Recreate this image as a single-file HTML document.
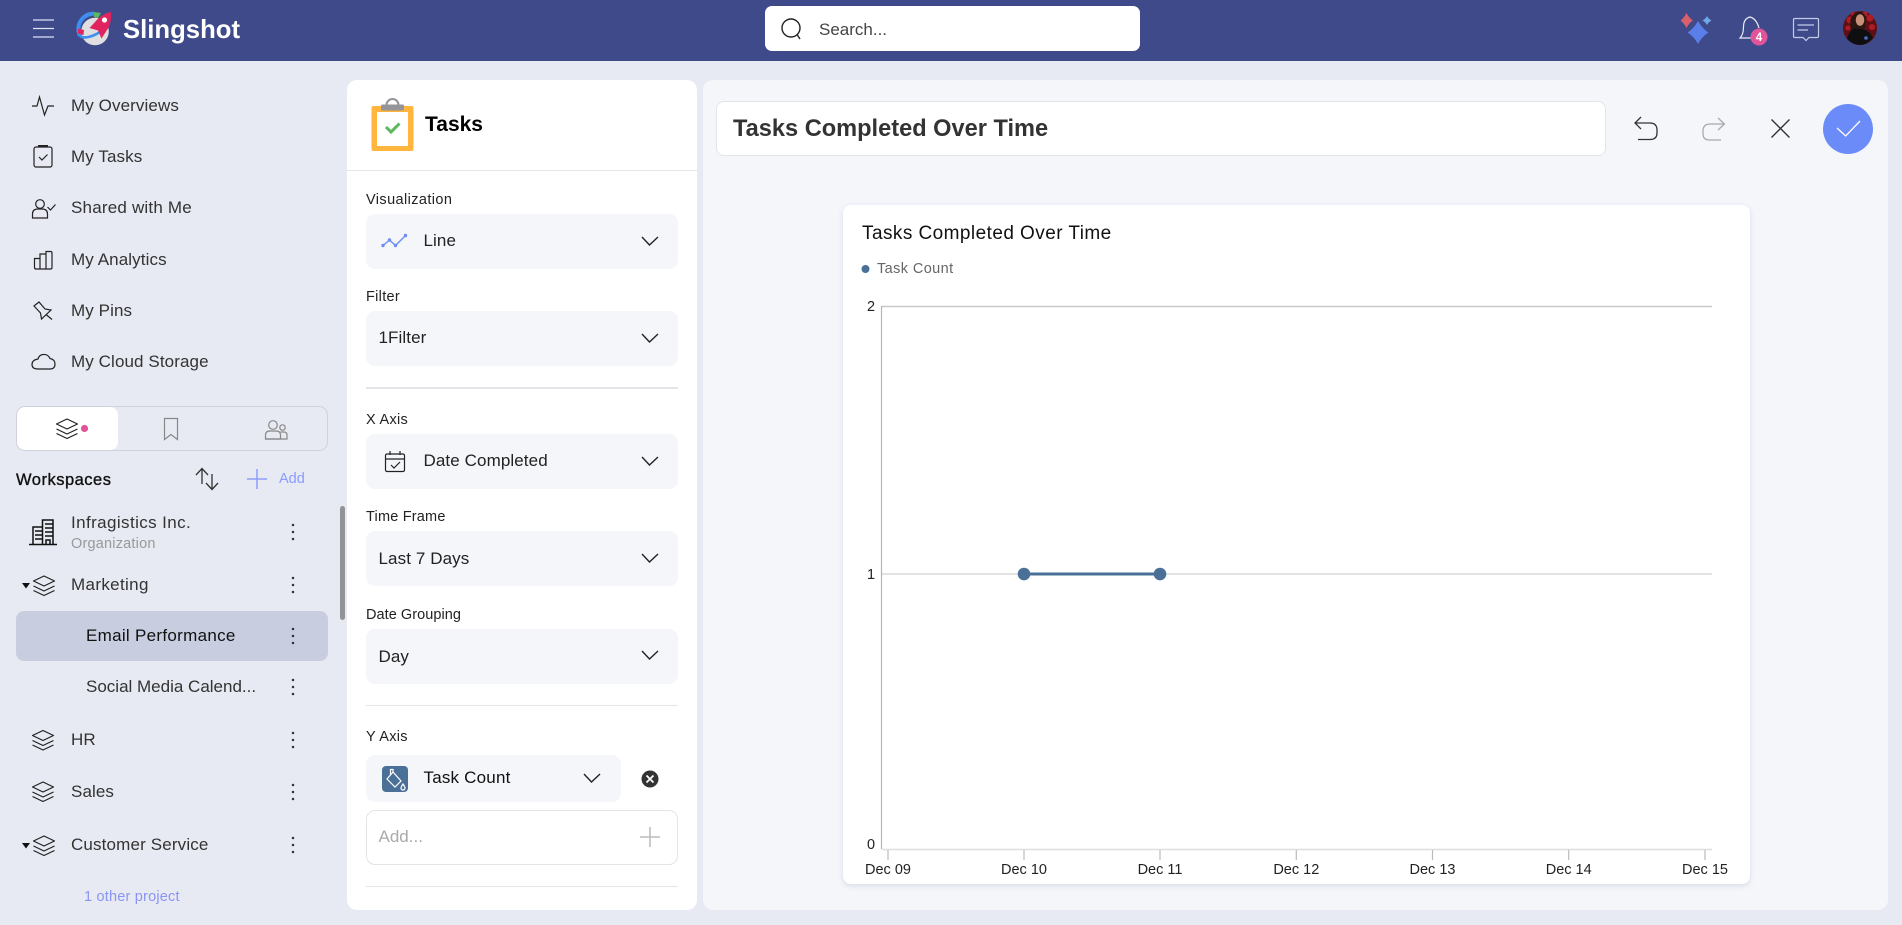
<!DOCTYPE html>
<html lang="en">
<head>
<meta charset="utf-8">
<title>Slingshot - Tasks Completed Over Time</title>
<style>
html,body{margin:0;padding:0;width:1902px;height:925px;overflow:hidden;background:#e7eaf2;font-family:"Liberation Sans",sans-serif;color:#333}
.b{position:absolute;box-sizing:border-box}
.t{position:absolute;white-space:nowrap;line-height:20px;height:20px}
.n{font-size:17px;letter-spacing:.1px;color:#333;left:71px}
.l{font-size:14.5px;letter-spacing:.3px;color:#222;left:366px}
.v{font-size:17px;letter-spacing:.1px;color:#222}
.s{left:366px;width:312px;height:55px;background:#f4f6fa;border-radius:9px}
.hr{left:366px;width:312px;height:1px;background:#e4e5e9}
svg.o{position:absolute;left:0;top:0;width:1902px;height:925px;pointer-events:none}
svg text{font-family:"Liberation Sans",sans-serif}
</style>
</head>
<body>
<div class="b" style="left:0;top:0;width:1902px;height:61px;background:#3f4a8a"></div>
<div class="t" style="left:123px;top:18px;font-size:25.7px;font-weight:bold;color:#fff;line-height:24px;height:24px">Slingshot</div>
<div class="b" style="left:765px;top:6px;width:375px;height:45px;background:#fff;border-radius:7px"></div>
<div class="t" style="left:819px;top:20px;font-size:17px;color:#444">Search...</div>

<div class="t n" style="top:96px">My Overviews</div>
<div class="t n" style="top:147px">My Tasks</div>
<div class="t n" style="top:198px;letter-spacing:.2px">Shared with Me</div>
<div class="t n" style="top:250px">My Analytics</div>
<div class="t n" style="top:301px">My Pins</div>
<div class="t n" style="top:352px">My Cloud Storage</div>

<div class="b" style="left:16px;top:406px;width:312px;height:45px;border:1px solid #cfd2dc;border-radius:9px"></div>
<div class="b" style="left:17px;top:407px;width:101px;height:43px;background:#fff;border-radius:8px"></div>
<div class="t" style="left:16px;top:470px;font-size:16.5px;color:#111;letter-spacing:.5px;-webkit-text-stroke:.35px #111">Workspaces</div>
<div class="t" style="left:279px;top:469px;font-size:14.5px;color:#8a9bff">Add</div>

<div class="t n" style="top:513px;letter-spacing:.4px">Infragistics Inc.</div>
<div class="t" style="left:71px;top:534px;font-size:14.5px;color:#999;letter-spacing:.2px">Organization</div>
<div class="t n" style="top:575px;letter-spacing:.35px">Marketing</div>
<div class="b" style="left:16px;top:611px;width:312px;height:50px;background:#c8cde0;border-radius:8px"></div>
<div class="t n" style="left:86px;top:626px;color:#111;letter-spacing:.3px">Email Performance</div>
<div class="t n" style="left:86px;top:677px;letter-spacing:0">Social Media Calend...</div>
<div class="t n" style="top:730px">HR</div>
<div class="t n" style="top:782px">Sales</div>
<div class="t n" style="top:835px;letter-spacing:.15px">Customer Service</div>
<div class="t" style="left:84px;top:887px;font-size:14.5px;color:#8a94f5;letter-spacing:.2px">1 other project</div>
<div class="b" style="left:340px;top:506px;width:5px;height:114px;background:#929396;border-radius:3px"></div>

<div class="b" style="left:347px;top:80px;width:350px;height:830px;background:#fff;border-radius:10px"></div>
<div class="b" style="left:347px;top:170px;width:350px;height:1px;background:#e5e5e8"></div>
<div class="t" style="left:425px;top:115px;font-size:21px;font-weight:bold;color:#000">Tasks</div>

<div class="t l" style="top:190px;letter-spacing:.4px">Visualization</div>
<div class="b s" style="top:214px"></div>
<div class="t v" style="left:423.5px;top:231px">Line</div>
<div class="t l" style="top:287px">Filter</div>
<div class="b s" style="top:311px"></div>
<div class="t v" style="left:378.5px;top:328px">1Filter</div>
<div class="b hr" style="top:387px;height:2px"></div>
<div class="t l" style="top:410px">X Axis</div>
<div class="b s" style="top:434px"></div>
<div class="t v" style="left:423.5px;top:451px">Date Completed</div>
<div class="t l" style="top:507px;letter-spacing:.2px">Time Frame</div>
<div class="b s" style="top:531px"></div>
<div class="t v" style="left:378.5px;top:549px">Last 7 Days</div>
<div class="t l" style="top:605px;letter-spacing:.05px">Date Grouping</div>
<div class="b s" style="top:629px"></div>
<div class="t v" style="left:378.5px;top:647px">Day</div>
<div class="b hr" style="top:705px"></div>
<div class="t l" style="top:727px">Y Axis</div>
<div class="b s" style="top:755px;width:255px;height:47px"></div>
<div class="t v" style="left:423.5px;top:768px;color:#111;letter-spacing:.2px">Task Count</div>
<div class="b" style="left:366px;top:810px;width:312px;height:55px;background:#fff;border:1px solid #e3e4e8;border-radius:9px"></div>
<div class="t" style="left:378.5px;top:827px;font-size:17px;color:#aaa">Add...</div>
<div class="b hr" style="top:886px"></div>

<div class="b" style="left:703px;top:80px;width:1185px;height:830px;background:#f4f6fa;border-radius:10px"></div>
<div class="b" style="left:716px;top:101px;width:890px;height:55px;background:#fff;border:1px solid #e3e4e8;border-radius:8px"></div>
<div class="t" style="left:733px;top:119px;font-size:23.6px;font-weight:bold;color:#333">Tasks Completed Over Time</div>

<div class="b" style="left:843px;top:205px;width:907px;height:679px;background:#fff;border-radius:8px;box-shadow:0 2px 6px rgba(60,70,110,.14)"></div>
<div class="t" style="left:862px;top:224px;font-size:19px;color:#111;letter-spacing:.44px">Tasks Completed Over Time</div>
<div class="t" style="left:877px;top:259px;font-size:14.5px;color:#666;letter-spacing:.4px">Task Count</div>

<svg class="o" viewBox="0 0 1902 925" xmlns="http://www.w3.org/2000/svg" fill="none">
  <defs>
    <path id="lay" d="M0 5.5L10.500 .5 21 5.500 10.500 10.500Z M0 10.500L10.500 15.500 21 10.500 M0 15L10.500 20 21 15" stroke="#222" stroke-width="1.200" stroke-linejoin="round"/>
    <g id="keb" fill="#333"><circle cx="0" cy="-7" r="1.250"/><circle cx="0" cy="0" r="1.250"/><circle cx="0" cy="7" r="1.250"/></g>
    <path id="chev" d="M-8 -4 L-.5 4 L8 -4" stroke="#222" stroke-width="1.400"/>
  </defs>

  <!-- header -->
  <g stroke="#dfe2f0" stroke-width="1.300"><path d="M33 20H54M33 28.500H54M33 37H54"/></g>
  <circle cx="95" cy="31.500" r="13.800" fill="#dfdfe2"/>
  <path d="M80 36C75 24 83 14 94 13.500" stroke="#3f8ef0" stroke-width="4"/>
  <path d="M94 12l7 1-3 5-4-1z" fill="#59b95d"/>
  <path d="M80 36C84 39 92 37 100 32" stroke="#3f8ef0" stroke-width="2.600"/>
  <path d="M78 28.500l6 1.500-.5 5-5.500-1.500z" fill="#e0245e"/>
  <path d="M111 12C111.500 20 110 26 107 30L101.500 38.500 98 30.500 89.500 28 95 22C99 17 104 13.500 111 12Z" fill="#e0245e"/>
  <circle cx="104.500" cy="20" r="2.600" fill="#fff"/>
  <circle cx="791" cy="28" r="9" stroke="#222" stroke-width="1.400"/><path d="M797 34.500L800 39" stroke="#222" stroke-width="1.400"/>
  <path d="M1698 21Q1702 28.500 1708.500 32.500Q1702 36.500 1698 44Q1694 36.500 1687.500 32.500Q1694 28.500 1698 21Z" fill="#5b7fe8"/>
  <path d="M1686.500 13Q1689 18 1693 20.500Q1689 23 1686.500 28Q1684 23 1680.500 20.500Q1684 18 1686.500 13Z" fill="#d9606a"/>
  <path d="M1707 16Q1708.500 19 1711.500 20.500Q1708.500 22 1707 25Q1705.500 22 1702.500 20.500Q1705.500 19 1707 16Z" fill="#6fa8e8"/>
  <path d="M1751 38H1740C1743 35 1743.500 31 1743.500 27C1743.500 21 1746 18 1750 17C1754 18 1757 21 1759 28" stroke="#e8eaf5" stroke-width="1.200"/>
  <circle cx="1759" cy="37" r="8.500" fill="#e0559a"/>
  <text x="1759" y="41" font-size="11.500" font-weight="bold" fill="#fff" text-anchor="middle">4</text>
  <path d="M1795 18.500H1817Q1818.500 18.500 1818.500 20V36Q1818.500 37.500 1817 37.500H1809L1806 40.500 1803 37.500H1795Q1793.500 37.500 1793.500 36V20Q1793.500 18.500 1795 18.500Z" stroke="#c5cae6" stroke-width="1.200"/>
  <path d="M1797.500 25H1814M1797.500 30H1808" stroke="#c5cae6" stroke-width="1.200"/>
  <circle cx="1860" cy="28" r="17" fill="#5e1015"/>
  <g fill="#b01c26"><circle cx="1850" cy="20" r="3.500"/><circle cx="1848" cy="28" r="2.500"/><circle cx="1870" cy="18" r="3.500"/><circle cx="1872" cy="27" r="3"/><circle cx="1865" cy="14" r="2.500"/><circle cx="1853" cy="14" r="2"/></g>
  <path d="M1852 32q-3-8-1-14 3-6 8-6 6 0 7 7l-1 9z" fill="#2a1512"/>
  <ellipse cx="1860" cy="20" rx="4.300" ry="5.800" fill="#c99078"/>
  <path d="M1847 39q2-9 9-11l1 1h6q7 2 10 9-6 7-13 7t-13-6z" fill="#0f0f12"/>
  <circle cx="1866" cy="38" r="1.800" fill="#4a6fc0"/>

  <!-- nav icons -->
  <g stroke="#222" stroke-width="1.200">
    <path d="M32 106H37L39.500 97 44.500 115 48 106H54"/>
    <rect x="34" y="147" width="18" height="20" rx="2"/><path d="M38 146H48" stroke-width="2"/><path d="M39 157L42 160 47.500 154.500"/>
    <circle cx="40" cy="204" r="4.300"/><path d="M32.500 218V214Q32.500 209 38 209H42Q47.500 209 47.500 214V218Z"/><path d="M47.500 207L50.500 210 55.500 204.500"/>
    <path d="M34.500 258.500H40V269H36Q34.500 269 34.500 267.500ZM40 254H46V269H40ZM46 251.500H50.500Q52 251.500 52 253V267.500Q52 269 50.500 269H46Z"/>
    <path d="M34 306L39 302 45 309 51 310 41.500 319 40.500 313ZM46 314.500L52 319.500"/>
    <path d="M38 369H50Q55 369 55 364 55 359.500 50 358.500 48 354 43 354.500 39 355 38 359 32 360 32 364.500 32 369 38 369Z"/>
  </g>
  <use href="#lay" x="56.500" y="418.500"/>
  <circle cx="84.500" cy="428.500" r="3.600" fill="#e0559a"/>
  <path d="M164.500 418.500H177.500V439.500L171 434.500 164.500 439.500Z" stroke="#888" stroke-width="1.200"/>
  <g stroke="#888" stroke-width="1.200"><circle cx="273" cy="425" r="4.300"/><path d="M265.500 439V435Q265.500 431 270 431H276Q280.500 431 280.500 435V439Z"/><circle cx="282.500" cy="427.500" r="2.700"/><path d="M280.500 432H284Q287 432 287 435V439H265.500"/></g>

  <!-- workspaces -->
  <g stroke="#333" stroke-width="1.300"><path d="M202 469V484M196 475L202 468.500 208 475M212 474V489M206 483L212 489.500 218 483"/></g>
  <path d="M247 479H267M257 469V489" stroke="#8e9dfb" stroke-width="1.500"/>
  <g stroke="#111" stroke-width="1.500"><path d="M29 544.500H57"/><path d="M42.500 544V520H53V544M33 544V527H42.500M35 531H42.500M35 535H42.500M35 539H42.500M45 524H53M45 528H53M45 532H53M45 536H53M46 544V540H50V544"/></g>
  <path d="M22 583H30L26 588.500Z" fill="#111"/>
  <path d="M22 843H30L26 848.500Z" fill="#111"/>
  <use href="#lay" x="33.500" y="575.500"/>
  <use href="#lay" x="32.500" y="730"/>
  <use href="#lay" x="32.500" y="781.500"/>
  <use href="#lay" x="33.500" y="835.500"/>
  <use href="#keb" x="293" y="532"/>
  <use href="#keb" x="293" y="585"/>
  <use href="#keb" x="293" y="636"/>
  <use href="#keb" x="293" y="687"/>
  <use href="#keb" x="293" y="740"/>
  <use href="#keb" x="293" y="792"/>
  <use href="#keb" x="293" y="845"/>

  <!-- tasks icon -->
  <rect x="371.500" y="106" width="42" height="45" rx="2" fill="#ffb53e"/>
  <rect x="377" y="112" width="31" height="34" fill="#fff"/>
  <path d="M386.500 105a5.800 5.800 0 0 1 12 0" stroke="#949499" stroke-width="2"/>
  <rect x="381" y="104.500" width="23" height="6" rx="1.500" fill="#949499"/>
  <path d="M386 127L391 132 399.500 123.500" stroke="#5cb85c" stroke-width="3"/>

  <!-- form icons -->
  <path d="M383 245.500L389.500 240 395.500 245.500 405.500 235.500" stroke="#6d8cf5" stroke-width="1.400"/>
  <g fill="#6d8cf5"><circle cx="383" cy="245.500" r="1.700"/><circle cx="389.500" cy="240" r="1.700"/><circle cx="395.500" cy="245.500" r="1.700"/><circle cx="405.500" cy="235.500" r="1.700"/></g>
  <use href="#chev" x="650" y="241"/>
  <use href="#chev" x="650" y="338"/>
  <use href="#chev" x="650" y="461"/>
  <use href="#chev" x="650" y="558"/>
  <use href="#chev" x="650" y="655"/>
  <use href="#chev" x="592" y="778"/>
  <g stroke="#222" stroke-width="1.200"><rect x="385.500" y="454" width="19" height="17.500" rx="1.500"/><path d="M385.500 459H404.500M390 451V455M400 451V455M391 465L394 468 400 462"/></g>
  <rect x="382" y="766" width="26" height="26" rx="4" fill="#4a7098"/>
  <g stroke="#fff" stroke-width="1.200"><path d="M393 772L401 781 395 787 387 779ZM393 772V769.500H390.500V775"/><path d="M403 784Q405 787 405 788A2 2 0 0 1 401 788Q401 787 403 784Z"/></g>
  <circle cx="650" cy="779" r="8.500" fill="#333"/>
  <path d="M646.500 775.500L653.500 782.500M653.500 775.500L646.500 782.500" stroke="#fff" stroke-width="1.800"/>
  <path d="M640 837H660M650 827V847" stroke="#bbb" stroke-width="1.500"/>

  <!-- toolbar -->
  <path d="M1641 117L1635 123 1641 129M1635 123H1650Q1657 123 1657 130V133Q1657 139.500 1650 139.500H1638" stroke="#333" stroke-width="1.300"/>
  <path d="M1718 118L1724.500 124 1718 130M1724.500 124H1710Q1703 124 1703 131V134Q1703 140 1710 140H1721" stroke="#aaa" stroke-width="1.300"/>
  <path d="M1771.500 119.500L1789.500 137.500M1789.500 119.500L1771.500 137.500" stroke="#333" stroke-width="1.400"/>
  <circle cx="1848" cy="129" r="25" fill="#6b8cf8"/>
  <path d="M1837 128L1845.700 136 1860 121" stroke="#fff" stroke-width="1.300"/>

  <!-- chart -->
  <circle cx="865.500" cy="269" r="4" fill="#4a7098"/>
  <path d="M882 306.500H1712" stroke="#c9c9c9" stroke-width="1.500"/>
  <path d="M882 574H1712" stroke="#d9d9d9" stroke-width="1.500"/>
  <path d="M882 849.500H1712" stroke="#dedede" stroke-width="1.500"/>
  <path d="M881.500 306V849" stroke="#b5b5b5" stroke-width="1.200"/>
  <g stroke="#bbb" stroke-width="1.200"><path d="M888 850V860M1024 850V860M1160 850V860M1296.300 850V860M1432.500 850V860M1568.700 850V860M1705 850V860"/></g>
  <path d="M1024 574H1160" stroke="#4a7098" stroke-width="3"/>
  <circle cx="1024" cy="574" r="6.300" fill="#4a7098"/>
  <circle cx="1160" cy="574" r="6.300" fill="#4a7098"/>
  <g font-size="14.500" fill="#222" text-anchor="middle">
    <text x="871" y="311">2</text>
    <text x="871" y="579">1</text>
    <text x="871" y="849">0</text>
    <text x="888" y="874">Dec 09</text>
    <text x="1024" y="874">Dec 10</text>
    <text x="1160" y="874">Dec 11</text>
    <text x="1296.300" y="874">Dec 12</text>
    <text x="1432.500" y="874">Dec 13</text>
    <text x="1568.700" y="874">Dec 14</text>
    <text x="1705" y="874">Dec 15</text>
  </g>
</svg>
</body>
</html>
